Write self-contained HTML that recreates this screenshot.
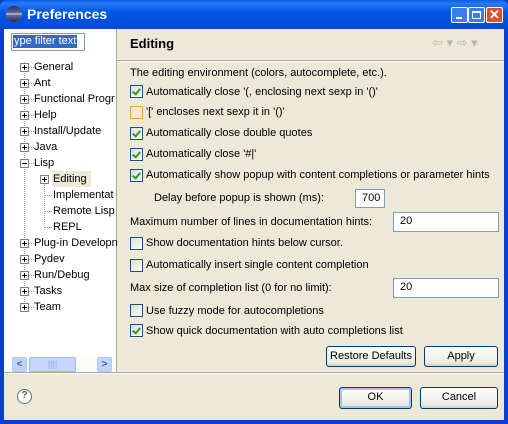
<!DOCTYPE html>
<html><head><style>
*{margin:0;padding:0;box-sizing:border-box}
body{width:508px;height:424px;overflow:hidden;font-family:"Liberation Sans",sans-serif;font-size:11px;color:#000;position:relative;background:#0a3fd0}
.a{position:absolute;white-space:nowrap;line-height:13px}
.cb{position:absolute;width:13px;height:13px;border:1px solid #1c5180;background:linear-gradient(135deg,#dcdcd6,#fff)}
.cb.on::after{content:"";position:absolute;left:3px;top:1px;width:3px;height:6px;border:solid #21a121;border-width:0 2px 2px 0;transform:rotate(40deg)}
.inp{position:absolute;background:#fff;border:1px solid #7f9db9;padding-left:6px;line-height:17px}
.btn{position:absolute;border:1px solid #003c74;border-radius:3px;background:linear-gradient(#fff,#ecebe6 80%,#d6d0c5);text-align:center;line-height:19px}
.ex{position:absolute;width:9px;height:9px;border:1px solid #808080;background:#fff}
.ex::before{content:"";position:absolute;left:1px;top:3px;width:5px;height:1px;background:#000}
.ex.p::after{content:"";position:absolute;left:3px;top:1px;width:1px;height:5px;background:#000}
.dl{position:absolute;border-top:1px dotted #a0a0a0;width:5px}
.tb{position:absolute;top:7px;width:17px;height:16px;border:1px solid #fff;border-radius:2px;background:#3b7cf0;overflow:hidden}
</style></head><body>
<div style="position:absolute;left:0;top:0;width:508px;height:29px;background:linear-gradient(#0a5ee6,#2a7af6 12%,#0058e6 40%,#0050dc 80%,#0a48c8);border-radius:7px 7px 0 0"></div>
<div style="position:absolute;left:6px;top:6px;width:16px;height:16px;border-radius:50%;background:linear-gradient(#2a2a5a,#6a6aa0 45%,#fff 50%,#6a6aa0 55%,#2a2a5a)"></div>
<div class="a" style="left:27px;top:6px;font-size:14px;line-height:17px;color:#fff;font-weight:bold">Preferences</div>
<div class="tb" style="left:451px"><div style="position:absolute;left:4px;top:9px;width:6px;height:2px;background:#fff"></div></div>
<div class="tb" style="left:468px"><div style="position:absolute;left:3px;top:3px;width:9px;height:8px;border:1px solid #fff;border-top-width:2px"></div></div>
<div class="tb" style="left:486px;background:#e0502c"><div style="position:absolute;left:0;top:-1px;width:15px;text-align:center;color:#fff;font-weight:bold;font-size:13px;line-height:15px">✕</div></div>
<div style="position:absolute;left:4px;top:29px;width:500px;height:391px;background:#ece9d8"></div>
<div style="position:absolute;left:4px;top:29px;width:112px;height:344px;background:#fff"></div>
<div style="position:absolute;left:116px;top:29px;width:1px;height:344px;background:#aca899"></div>
<div style="position:absolute;left:4px;top:372px;width:500px;height:1px;background:#aca899"></div>
<div style="position:absolute;left:4px;top:373px;width:500px;height:1px;background:#fff"></div>
<div style="position:absolute;left:11px;top:33px;width:74px;height:18px;border:1px solid #7f9db9;background:#fff"></div>
<div class="a" style="left:13px;top:35px;background:#316ac5;color:#fff;padding:0 1px">ype filter text</div>
<div style="position:absolute;left:24px;top:62px;height:250px;border-left:1px dotted #a0a0a0"></div>
<div style="position:absolute;left:44px;top:184px;height:44px;border-left:1px dotted #a0a0a0"></div>
<div class="ex p" style="left:20px;top:63px"></div><div class="dl" style="left:29px;top:67px"></div><div class="a" style="left:34px;top:61px">General</div>
<div class="ex p" style="left:20px;top:79px"></div><div class="dl" style="left:29px;top:83px"></div><div class="a" style="left:34px;top:77px">Ant</div>
<div class="ex p" style="left:20px;top:95px"></div><div class="dl" style="left:29px;top:99px"></div><div class="a" style="left:34px;top:93px">Functional Progr</div>
<div class="ex p" style="left:20px;top:111px"></div><div class="dl" style="left:29px;top:115px"></div><div class="a" style="left:34px;top:109px">Help</div>
<div class="ex p" style="left:20px;top:127px"></div><div class="dl" style="left:29px;top:131px"></div><div class="a" style="left:34px;top:125px">Install/Update</div>
<div class="ex p" style="left:20px;top:143px"></div><div class="dl" style="left:29px;top:147px"></div><div class="a" style="left:34px;top:141px">Java</div>
<div class="ex" style="left:20px;top:159px"></div><div class="dl" style="left:29px;top:163px"></div><div class="a" style="left:34px;top:157px">Lisp</div>
<div style="position:absolute;left:52px;top:171px;width:39px;height:16px;background:#ece9d8"></div>
<div class="ex p" style="left:40px;top:175px"></div><div class="a" style="left:53px;top:173px">Editing</div>
<div class="dl" style="left:45px;top:195px;width:7px"></div><div class="a" style="left:53px;top:189px">Implementat</div>
<div class="dl" style="left:45px;top:211px;width:7px"></div><div class="a" style="left:53px;top:205px">Remote Lisp</div>
<div class="dl" style="left:45px;top:227px;width:7px"></div><div class="a" style="left:53px;top:221px">REPL</div>
<div class="ex p" style="left:20px;top:239px"></div><div class="dl" style="left:29px;top:243px"></div><div class="a" style="left:34px;top:237px">Plug-in Developn</div>
<div class="ex p" style="left:20px;top:255px"></div><div class="dl" style="left:29px;top:259px"></div><div class="a" style="left:34px;top:253px">Pydev</div>
<div class="ex p" style="left:20px;top:271px"></div><div class="dl" style="left:29px;top:275px"></div><div class="a" style="left:34px;top:269px">Run/Debug</div>
<div class="ex p" style="left:20px;top:287px"></div><div class="dl" style="left:29px;top:291px"></div><div class="a" style="left:34px;top:285px">Tasks</div>
<div class="ex p" style="left:20px;top:303px"></div><div class="dl" style="left:29px;top:307px"></div><div class="a" style="left:34px;top:301px">Team</div>
<div style="position:absolute;left:11px;top:356px;width:102px;height:16px;background:#fbfbf8"></div>
<div style="position:absolute;left:12px;top:357px;width:15px;height:15px;background:#c1d3fb;border:1px solid #b4c8f6;border-radius:2px;color:#4d6185;font-size:10px;text-align:center;line-height:13px;font-weight:bold">&lt;</div>
<div style="position:absolute;left:29px;top:357px;width:47px;height:15px;background:#c6d6fc;border:1px solid #9cb8f0;border-radius:2px;color:#8ca8e0;text-align:center;line-height:12px;font-size:9px">||||</div>
<div style="position:absolute;left:97px;top:357px;width:15px;height:15px;background:#c1d3fb;border:1px solid #b4c8f6;border-radius:2px;color:#4d6185;font-size:10px;text-align:center;line-height:13px;font-weight:bold">&gt;</div>
<div class="a" style="left:130px;top:36px;font-size:13px;line-height:16px;font-weight:bold">Editing</div>
<div class="a" style="left:432px;top:36px;color:#b8b8b0;font-size:13px">⇦ ▾ ⇨ ▾</div>
<div style="position:absolute;left:117px;top:60px;width:387px;height:1px;background:#aca899"></div>
<div style="position:absolute;left:117px;top:61px;width:387px;height:1px;background:#fff"></div>
<div class="a" style="left:130px;top:67px">The editing environment (colors, autocomplete, etc.).</div>
<div class="cb on" style="left:130px;top:85px"></div><div class="a" style="left:146px;top:86px">Automatically close '(, enclosing next sexp in '()'</div>
<div class="cb" style="left:130px;top:106px;border-color:#e8a040;background:#fbe8c4"></div><div class="a" style="left:146px;top:106px">'[' encloses next sexp it in '()'</div>
<div class="cb on" style="left:130px;top:127px"></div><div class="a" style="left:146px;top:127px">Automatically close double quotes</div>
<div class="cb on" style="left:130px;top:148px"></div><div class="a" style="left:146px;top:148px">Automatically close '#|'</div>
<div class="cb on" style="left:130px;top:169px"></div><div class="a" style="left:146px;top:169px">Automatically show popup with content completions or parameter hints</div>
<div class="a" style="left:154px;top:192px">Delay before popup is shown (ms):</div>
<div class="inp" style="left:355px;top:189px;width:30px;height:19px">700</div>
<div class="a" style="left:130px;top:216px">Maximum number of lines in documentation hints:</div>
<div class="inp" style="left:393px;top:212px;width:106px;height:20px">20</div>
<div class="cb" style="left:130px;top:237px"></div><div class="a" style="left:146px;top:237px">Show documentation hints below cursor.</div>
<div class="cb" style="left:130px;top:259px"></div><div class="a" style="left:146px;top:259px">Automatically insert single content completion</div>
<div class="a" style="left:130px;top:282px">Max size of completion list (0 for no limit):</div>
<div class="inp" style="left:393px;top:278px;width:106px;height:20px">20</div>
<div class="cb" style="left:130px;top:304px"></div><div class="a" style="left:146px;top:305px">Use fuzzy mode for autocompletions</div>
<div class="cb on" style="left:130px;top:324px"></div><div class="a" style="left:146px;top:325px">Show quick documentation with auto completions list</div>
<div class="btn" style="left:326px;top:346px;width:90px;height:21px">Restore Defaults</div>
<div class="btn" style="left:424px;top:346px;width:74px;height:21px">Apply</div>
<div class="btn" style="left:339px;top:387px;width:73px;height:22px;box-shadow:inset 0 0 0 2px #a8c0f0">OK</div>
<div class="btn" style="left:420px;top:387px;width:78px;height:22px">Cancel</div>
<div style="position:absolute;left:17px;top:389px;width:15px;height:15px;border:1.5px solid #707070;border-radius:50%;background:#fff;text-align:center;font-weight:bold;font-size:10px;line-height:12px;color:#606060">?</div>
</body></html>
